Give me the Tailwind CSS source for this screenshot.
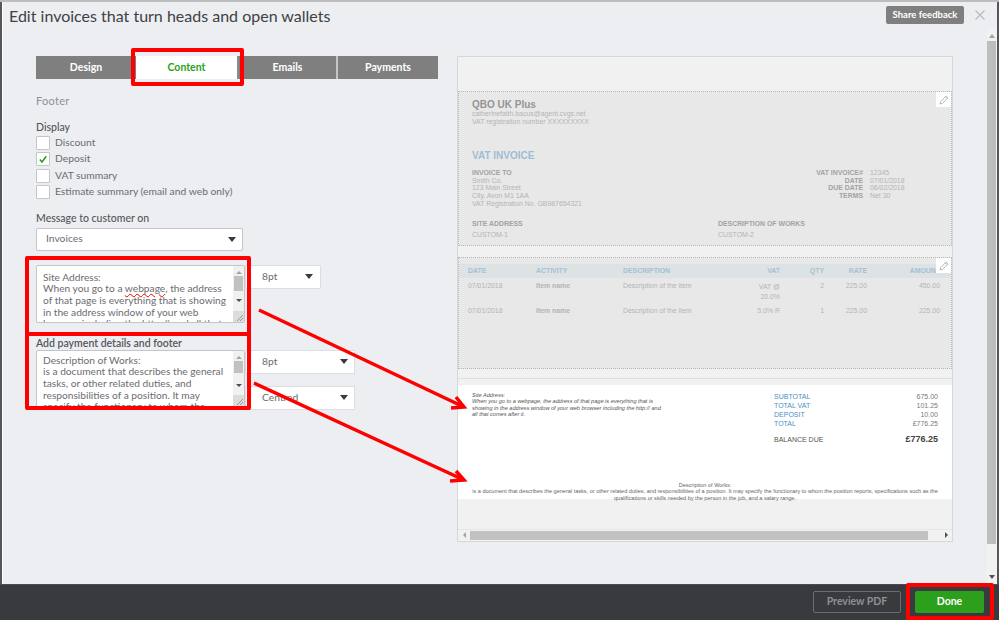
<!DOCTYPE html>
<html lang="en">
<head>
    <meta charset="UTF-8" />
    <title>Edit invoices</title>
    <script src="https://cdn.jsdelivr.net/npm/@tailwindcss/browser@4"></script>
</head>
<body class="w-[999px] h-[620px] overflow-hidden bg-white font-['Lato',sans-serif] text-[#6b6c72]">
<div class="relative flex flex-col w-[999px] h-[620px] overflow-hidden bg-[#eceef1]">
    <div class="h-[2px] shrink-0 bg-[#bdbdbd]"></div>
    <div class="flex h-[582px] shrink-0">
        <div class="w-[2px] shrink-0 bg-[#55565a]"></div>
        <div class="flex-1 min-w-0 border-l border-white">
            <div class="flex items-start h-[54px]">
                <h1 class="ml-[6px] mt-[1px] text-[16px] leading-[26px] text-[#404144]">Edit invoices that turn heads and open wallets</h1>
                <button class="ml-auto mt-[4px] w-[78px] h-[18px] rounded-[2px] bg-[#7f7f7f] text-white text-[9.5px] font-bold leading-[18px]">Share feedback</button>
                <svg class="ml-[11px] mt-[8px]" width="10" height="10" viewBox="0 0 10 10" fill="none" stroke="#b9bbbe" stroke-width="1.2"><path d="M0.5 0.5l9 9M9.5 0.5l-9 9" /></svg>
                <div class="w-[2px]"></div>
            </div>
            <div class="flex">
                <div class="w-[454px] shrink-0 pl-[33px]">
                    <div class="flex w-[402px] h-[23px] text-[10.5px] font-bold text-white leading-[23px] text-center">
                        <div class="w-[100px] bg-[#7f7f7f]">Design</div>
                        <div class="w-[103px] bg-white text-[#2ca01c] border-r-[2px] border-[#8a8a8a]">Content</div>
                        <div class="w-[97px] bg-[#7f7f7f]">Emails</div>
                        <div class="flex-1 bg-[#7f7f7f] border-l-[2px] border-[#c4c5c8]">Payments</div>
                    </div>
                    <p class="mt-[15px] text-[11px] leading-[14px] text-[#8d9096] tracking-[0.3px]">Footer</p>
                    <p class="mt-[12px] text-[10.5px] leading-[14px] font-medium text-[#55565a]">Display</p>
                    <div class="mt-[2px] flex flex-col text-[10.3px] text-[#6b6c72]">
                        <label class="flex items-start gap-[5px] h-[16.4px]"><span class="w-[14px] h-[14px] bg-white border border-[#c4c5c8] rounded-[1px]"></span><span class="leading-[13px]">Discount</span></label>
                        <label class="flex items-start gap-[5px] h-[16.4px]"><span class="w-[14px] h-[14px] bg-white border border-[#c4c5c8] rounded-[1px] flex items-center justify-center"><svg width="10" height="10" viewBox="0 0 10 10" fill="none" stroke="#2ca01c" stroke-width="1.6"><path d="M1.8 5.5l2.2 2.4 4.2-5.6" /></svg></span><span class="leading-[13px]">Deposit</span></label>
                        <label class="flex items-start gap-[5px] h-[16.4px]"><span class="w-[14px] h-[14px] bg-white border border-[#c4c5c8] rounded-[1px]"></span><span class="leading-[13px]">VAT summary</span></label>
                        <label class="flex items-start gap-[5px] h-[16.4px]"><span class="w-[14px] h-[14px] bg-white border border-[#c4c5c8] rounded-[1px]"></span><span class="leading-[13px]">Estimate summary (email and web only)</span></label>
                    </div>
                    <p class="mt-[9px] text-[10.5px] leading-[14px] font-medium text-[#55565a]">Message to customer on</p>
                    <div class="mt-[3px] flex items-center justify-between w-[207px] h-[23px] bg-white border border-[#c4c5c8] rounded-[2px] pl-[9px] pr-[6px] text-[10.3px]">
                        <span>Invoices</span>
                        <span class="w-0 h-0 border-x-[4px] border-x-transparent border-t-[5px] border-t-[#393a3d]"></span>
                    </div>
                    <div class="mt-[14px] flex items-start">
                        <div class="relative w-[209px] h-[58px] bg-white border border-[#c4c5c8] rounded-[2px] overflow-hidden pl-[6px] pt-[6px] text-[10.2px] leading-[11.7px] whitespace-nowrap">
                            <p>Site Address:<br />When you go to a <span class="underline decoration-wavy decoration-[#e00] decoration-1 underline-offset-[1px]">webpage</span>, the address<br />of that page is everything that is showing<br />in the address window of your web<br />browser including the http:// and all that</p>
                            <div class="absolute right-0 top-0 bottom-0 w-[11px] bg-[#f1f1f1] flex flex-col items-center">
                                <span class="mt-[5px] w-0 h-0 border-x-[3px] border-x-transparent border-b-[3px] border-b-[#a3a3a3]"></span>
                                <span class="mt-[2px] w-[9px] h-[15px] bg-[#c1c1c1]"></span>
                                <span class="mt-[8px] w-0 h-0 border-x-[3px] border-x-transparent border-t-[3px] border-t-[#505050]"></span>
                                <span class="mt-auto w-[11px] h-[11px] bg-[#dcdcdc] flex items-end justify-end"><svg width="9" height="9" viewBox="0 0 9 9" stroke="#777" stroke-width="0.7"><path d="M2 8l6-6M5 8l3-3" /></svg></span>
                            </div>
                        </div>
                        <div class="flex items-center justify-between w-[76px] h-[24px] bg-white border border-[#dcdee1] rounded-[1px] pl-[16px] pr-[7px] text-[10.3px]">
                            <span>8pt</span>
                            <span class="w-0 h-0 border-x-[4px] border-x-transparent border-t-[5px] border-t-[#393a3d]"></span>
                        </div>
                    </div>
                    <p class="mt-[13px] text-[10.5px] leading-[14px] font-semibold text-[#55565a]">Add payment details and footer</p>
                    <div class="flex items-start">
                        <div class="relative w-[209px] h-[57px] bg-white border border-[#c4c5c8] rounded-[2px] overflow-hidden pl-[6px] pt-[4px] text-[10.2px] leading-[11.7px] whitespace-nowrap">
                            <p>Description of Works:<br />is a document that describes the general<br />tasks, or other related duties, and<br />responsibilities of a position. It may<br />specify the functionary to whom the</p>
                            <div class="absolute right-0 top-0 bottom-0 w-[11px] bg-[#f1f1f1] flex flex-col items-center">
                                <span class="mt-[5px] w-0 h-0 border-x-[3px] border-x-transparent border-b-[3px] border-b-[#a3a3a3]"></span>
                                <span class="mt-[2px] w-[9px] h-[12px] bg-[#c1c1c1]"></span>
                                <span class="mt-[11px] w-0 h-0 border-x-[3px] border-x-transparent border-t-[3px] border-t-[#505050]"></span>
                                <span class="mt-auto w-[11px] h-[11px] bg-[#dcdcdc] flex items-end justify-end"><svg width="9" height="9" viewBox="0 0 9 9" stroke="#777" stroke-width="0.7"><path d="M2 8l6-6M5 8l3-3" /></svg></span>
                            </div>
                        </div>
                        <div class="flex flex-col gap-[12px]">
                            <div class="flex items-center justify-between w-[110px] h-[24px] bg-white border border-[#dcdee1] rounded-[1px] pl-[16px] pr-[6px] text-[10.3px]">
                                <span>8pt</span>
                                <span class="w-0 h-0 border-x-[4px] border-x-transparent border-t-[5px] border-t-[#393a3d]"></span>
                            </div>
                            <div class="flex items-center justify-between w-[110px] h-[24px] bg-white border border-[#dcdee1] rounded-[1px] pl-[16px] pr-[6px] text-[10.3px]">
                                <span>Centred</span>
                                <span class="w-0 h-0 border-x-[4px] border-x-transparent border-t-[5px] border-t-[#393a3d]"></span>
                            </div>
                        </div>
                    </div>
                </div>
                <div class="w-[496px] h-[486px] shrink-0 border border-[#d4d7dc] bg-[#f1f1f1] font-['Liberation_Sans',sans-serif] flex flex-col text-[#b4b4b4] text-[6.9px] leading-[7.6px]">
                    <div class="h-[34px] shrink-0"></div>
                    <div class="relative h-[155px] shrink-0 border border-dotted border-[#b8b8b8] bg-[#e8e8e8] pl-[13px] pt-[7px]">
                        <p class="text-[10px] leading-[12px] font-bold text-[#949494]">QBO UK Plus</p>
                        <p class="mt-[-1px]">catherinefaith.bacus@agent.cvgs.net<br />VAT registration number XXXXXXXXX</p>
                        <p class="mt-[25px] text-[10px] leading-[12px] font-bold text-[#9dbdd2]">VAT INVOICE</p>
                        <div class="mt-[7px] flex">
                            <div class="w-[331px]"><b class="text-[#a2a2a2]">INVOICE TO</b><br />Smith Co.<br />123 Main Street<br />City, Avon M1 1AA<br />VAT Registration No. GB987654321</div>
                            <div class="w-[60px] text-right font-bold text-[#a2a2a2] whitespace-nowrap">VAT INVOICE#<br />DATE<br />DUE DATE<br />TERMS</div>
                            <div class="ml-[7px]">12345<br />07/01/2018<br />06/02/2018<br />Net 30</div>
                        </div>
                        <div class="mt-[13px] flex">
                            <div class="w-[246px]"><b class="text-[#a2a2a2]">SITE ADDRESS</b><br /><span class="block mt-[3px]">CUSTOM-1</span></div>
                            <div><b class="text-[#a2a2a2]">DESCRIPTION OF WORKS</b><br /><span class="block mt-[3px]">CUSTOM-2</span></div>
                        </div>
                        <span class="absolute right-0 top-0 w-[15px] h-[15px] bg-white flex items-center justify-center"><svg width="10" height="10" viewBox="0 0 10 10" fill="none" stroke="#9a9a9a" stroke-width="0.7"><path d="M1 9l.6-2.4L7.2 1l1.8 1.8-5.6 5.6zM6.4 1.8l1.8 1.8" /></svg></span>
                    </div>
                    <div class="h-[11px] shrink-0"></div>
                    <div class="relative h-[112px] shrink-0 border border-dotted border-[#b8b8b8] bg-[#e8e8e8] pt-[6px]">
                        <div class="flex h-[14px] items-center bg-[#dde2e5] text-[#a5c0d4] font-bold pl-[9px]">
                            <span class="w-[68px]">DATE</span><span class="w-[87px]">ACTIVITY</span><span class="w-[100px]">DESCRIPTION</span><span class="w-[57px] text-right">VAT</span><span class="w-[44px] text-right">QTY</span><span class="w-[43px] text-right">RATE</span><span class="w-[73px] text-right">AMOUNT</span>
                        </div>
                        <div class="flex pl-[9px] mt-[4px]">
                            <span class="w-[68px]">07/01/2018</span><span class="w-[87px] font-bold">Item name</span><span class="w-[100px]">Description of the item</span><span class="w-[57px] text-right leading-[10px]">VAT @<br />20.0%</span><span class="w-[44px] text-right">2</span><span class="w-[43px] text-right">225.00</span><span class="w-[73px] text-right">450.00</span>
                        </div>
                        <div class="flex pl-[9px] mt-[5px]">
                            <span class="w-[68px]">07/01/2018</span><span class="w-[87px] font-bold">Item name</span><span class="w-[100px]">Description of the item</span><span class="w-[57px] text-right">5.0% R</span><span class="w-[44px] text-right">1</span><span class="w-[43px] text-right">225.00</span><span class="w-[73px] text-right">225.00</span>
                        </div>
                        <span class="absolute right-0 top-0 w-[15px] h-[15px] bg-white flex items-center justify-center"><svg width="10" height="10" viewBox="0 0 10 10" fill="none" stroke="#9a9a9a" stroke-width="0.7"><path d="M1 9l.6-2.4L7.2 1l1.8 1.8-5.6 5.6zM6.4 1.8l1.8 1.8" /></svg></span>
                    </div>
                    <div class="h-[10px] shrink-0 border-b border-[#dfdfdf]"></div>
                    <div class="h-[6px] shrink-0"></div>
                    <div class="h-[114px] shrink-0 bg-white relative text-[#7a7a7a]">
                        <div class="flex pl-[14px] pt-[7px]">
                            <p class="w-[190px] italic text-[5.6px] leading-[6.4px] text-[#555] whitespace-nowrap">Site Address:<br />When you go to a webpage, the address of that page is everything that is<br />showing in the address window of your web browser including the http:// and<br />all that comes after it.</p>
                            <div class="ml-[112px] w-[164px] text-[7px] leading-[9px]">
                                <div class="flex justify-between"><span class="text-[#4d90c0]">SUBTOTAL</span><span>675.00</span></div>
                                <div class="flex justify-between"><span class="text-[#4d90c0]">TOTAL VAT</span><span>101.25</span></div>
                                <div class="flex justify-between"><span class="text-[#4d90c0]">DEPOSIT</span><span>10.00</span></div>
                                <div class="flex justify-between"><span class="text-[#4d90c0]">TOTAL</span><span>£776.25</span></div>
                                <div class="flex justify-between items-center mt-[7px] text-[#555]"><span>BALANCE DUE</span><b class="text-[9px] text-[#444]">£776.25</b></div>
                            </div>
                        </div>
                        <p class="absolute left-0 right-0 bottom-[-2px] text-center text-[5.55px] leading-[6.4px] whitespace-nowrap text-[#666]">Description of Works:<br />is a document that describes the general tasks, or other related duties, and responsibilities of a position. It may specify the functionary to whom the position reports, specifications such as the<br />qualifications or skills needed by the person in the job, and a salary range.</p>
                    </div>
                    <div class="flex-1"></div>
                    <div class="h-[11px] shrink-0 mb-[1px] flex items-center border-t border-[#e6e6e6] bg-[#f1f1f1]">
                        <span class="ml-[5px] w-0 h-0 border-y-[3px] border-y-transparent border-r-[3px] border-r-[#a3a3a3]"></span>
                        <span class="ml-[4px] w-[458px] h-[9px] bg-[#c1c1c1]"></span>
                        <span class="ml-auto mr-[4px] w-0 h-0 border-y-[3px] border-y-transparent border-l-[3px] border-l-[#505050]"></span>
                    </div>
                </div>
            </div>
        </div>
        <div class="w-[10px] shrink-0 mt-[27px] bg-[#f1f1f1] flex flex-col items-center">
            <span class="mt-[5px] w-0 h-0 border-x-[3px] border-x-transparent border-b-[4px] border-b-[#a3a3a3]"></span>
            <span class="mt-[3px] w-[9px] h-[503px] bg-[#bdbdbd] self-start"></span>
            <span class="mt-auto mb-[5px] w-0 h-0 border-x-[3px] border-x-transparent border-t-[4px] border-t-[#505050]"></span>
        </div>
        <div class="w-[2px] shrink-0 bg-[#55565a]"></div>
    </div>
    <div class="flex flex-1 items-start pt-[6px] justify-end bg-[#393a3d] pr-[15px] gap-[14px] font-bold border-t border-[#4a4b4f]">
        <button class="w-[88px] h-[22px] border border-[#6b6c72] rounded-[2px] text-[#8d9096] text-[10.5px]">Preview PDF</button>
        <button class="w-[69px] h-[22px] rounded-[2px] bg-[#2ca01c] text-white text-[10.5px]">Done</button>
    </div>

    <!-- red annotations over the screenshot -->
    <div class="absolute left-[131px] top-[48px] w-[113px] h-[38px] border-[4px] border-[#f00] rounded-[2px]"></div>
    <div class="absolute left-[25px] top-[256px] w-[226px] h-[80px] border-[4px] border-[#f00] rounded-[2px]"></div>
    <div class="absolute left-[25px] top-[332px] w-[226px] h-[78px] border-[4px] border-[#f00] rounded-[2px]"></div>
    <div class="absolute left-[906px] top-[583px] w-[88px] h-[37px] border-[4px] border-[#f00] rounded-[2px]"></div>
    <svg class="absolute left-0 top-0" width="999" height="620" fill="none" stroke="#f00" stroke-width="3.5">
        <path d="M259 310L464 407M456 397L464 407L451 408" />
        <path d="M254 383L464 480M456 471L464 480L450 481" />
    </svg>
</div>
</body>
</html>
